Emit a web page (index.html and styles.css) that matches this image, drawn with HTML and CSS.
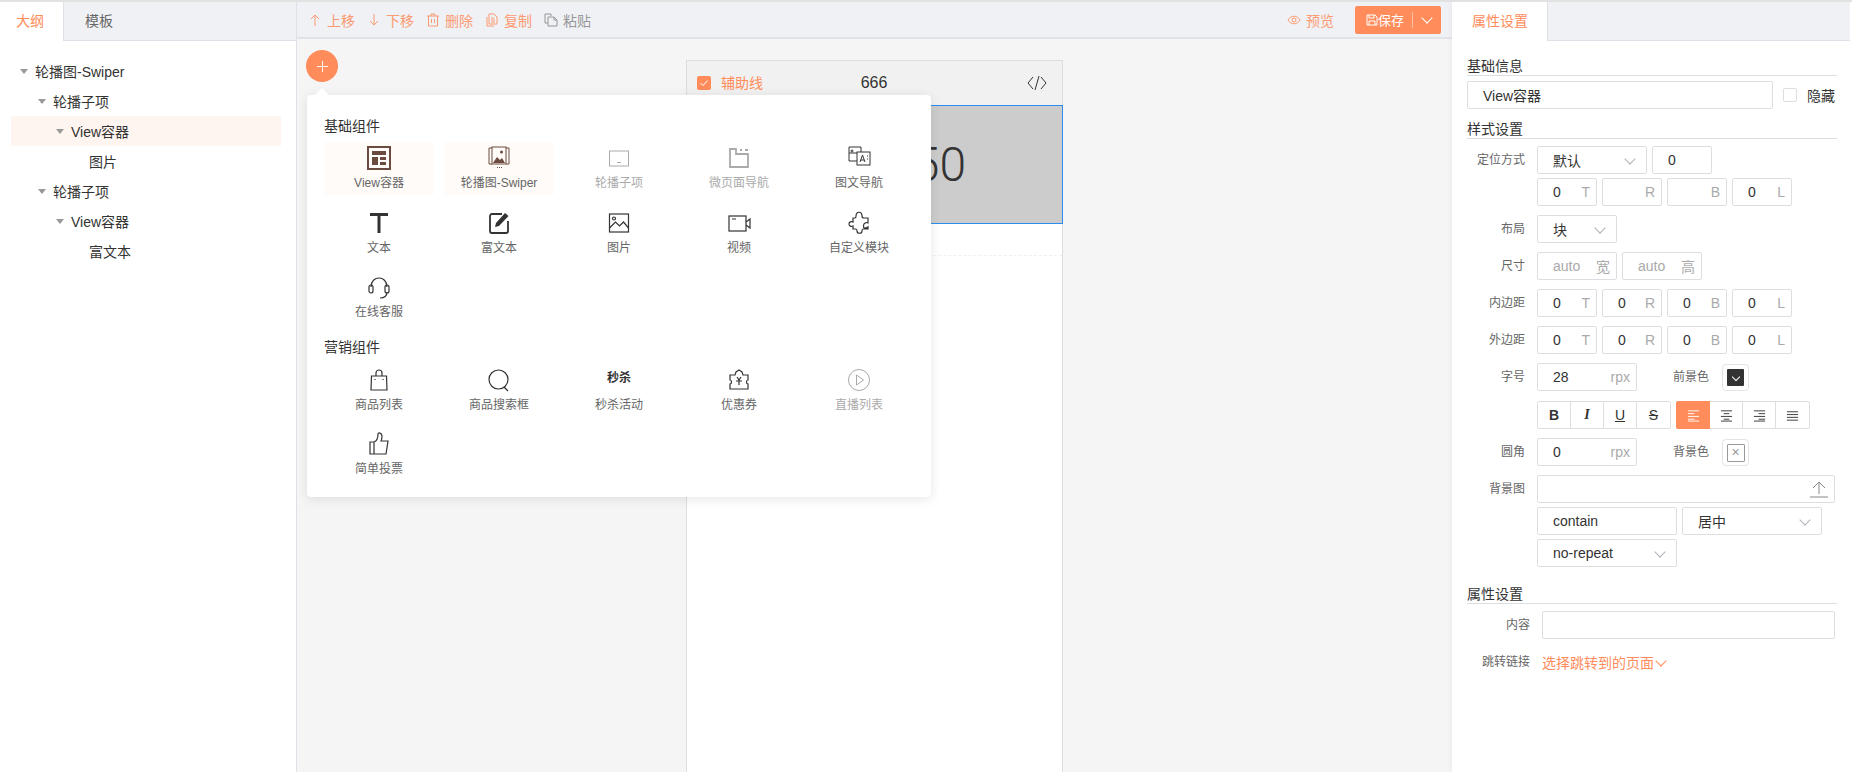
FILE: index.html
```html
<!DOCTYPE html>
<html lang="zh-CN">

<head>
    <meta charset="UTF-8">
    <title>页面编辑</title>
    <link rel="stylesheet" href="styles.css">
</head>

<body>
    <div class="app">
        <!-- left outline -->
        <aside class="left">
            <div class="tabs">
                <div class="tab active">大纲</div>
                <div class="tab">模板</div>
            </div>
            <div class="tree">
                <div class="node d0"><i class="tri"></i>轮播图-Swiper</div>
                <div class="node d1"><i class="tri"></i>轮播子项</div>
                <div class="node d2 selected"><i class="tri"></i>View容器</div>
                <div class="node d3">图片</div>
                <div class="node d1"><i class="tri"></i>轮播子项</div>
                <div class="node d2"><i class="tri"></i>View容器</div>
                <div class="node d3">富文本</div>
            </div>
        </aside>

        <!-- center -->
        <main class="center">
            <div class="toolbar">
                <a class="tool">
                    <svg viewBox="0 0 14 14"><path d="M7 13V2M3 6l4-4 4 4"/></svg>上移
                </a>
                <a class="tool">
                    <svg viewBox="0 0 14 14"><path d="M7 1v11M3 8l4 4 4-4"/></svg>下移
                </a>
                <a class="tool">
                    <svg viewBox="0 0 14 14"><path d="M1 3h12M5 3V1h4v2M2.500 3v10h9V3M5.500 6v4M8.500 6v4"/></svg>删除
                </a>
                <a class="tool">
                    <svg viewBox="0 0 14 14"><path d="M4 1h5l3 3v7H4zM2 4v9h7M6 5h3M6 7h4M6 9h4"/></svg>复制
                </a>
                <a class="tool off">
                    <svg viewBox="0 0 14 14"><path d="M1 1h6v2M1 1v9h3M4 4h6l3 3v6H4zM10 4v3h3"/></svg>粘贴
                </a>
                <a class="tool preview">
                    <svg viewBox="0 0 14 14"><path d="M1 7c3-5 9-5 12 0-3 5-9 5-12 0z"/><circle cx="7" cy="7" r="2"/></svg>预览
                </a>
                <div class="save">
                    <span class="save-main">
                        <svg viewBox="0 0 12 12"><path d="M1 1h8l2 2v8H1zM3 1v3h5V1M3 11V7h6v4"/></svg>保存
                    </span>
                    <span class="save-more"><i class="chev"></i></span>
                </div>
            </div>

            <div class="canvas">
                <div class="phone">
                    <div class="phone-head">
                        <label class="guide"><span class="check">
                            <svg viewBox="0 0 14 14"><path d="M3.500 7l2.500 2.500 4.500-5"/></svg>
                        </span><span class="guide-text">辅助线</span></label>
                        <span class="phone-title">666</span>
                        <svg class="code" viewBox="0 0 20 16"><path d="M6 2L1 8l5 6M14 2l5 6-5 6M12 1L8 15"/></svg>
                    </div>
                    <div class="banner">50</div>
                    <div class="dash"></div>
                </div>

                <div class="add"><svg viewBox="0 0 14 14"><path d="M7 1v12M1 7h12"/></svg></div>

                <div class="popover">
                    <div class="pop-title">基础组件</div>
                    <div class="pop-grid">
                        <div class="item used">
                            <svg class="brown" viewBox="0 0 24 24"><rect x="1" y="1" width="22" height="22"/><path class="fill" d="M5 5h14v4H5zM5 11h6v8H5zM13 11h6v3h-6zM13 16h6v3h-6z"/></svg>
                            <span>View容器</span>
                        </div>
                        <div class="item used">
                            <svg class="brown thin" viewBox="0 0 24 24"><path d="M5 2H2v16h3M19 2h3v16h-3"/><rect x="5" y="1" width="14" height="17"/><circle cx="14.500" cy="6" r="1.500" class="fill"/><path class="fill" d="M6 17l4-6 3 3 2-2 3 5z"/><path d="M10 21.500h1M12 21.500h1M14 21.500h1"/></svg>
                            <span>轮播图-Swiper</span>
                        </div>
                        <div class="item off">
                            <svg viewBox="0 0 24 24"><rect x="2.500" y="5" width="19" height="15"/><path d="M10 16.500h4"/></svg>
                            <span>轮播子项</span>
                        </div>
                        <div class="item off">
                            <svg class="bold" viewBox="0 0 24 24"><path d="M3 3v18h18V8H9V3zM13 4h2M18 4h3"/></svg>
                            <span>微页面导航</span>
                        </div>
                        <div class="item">
                            <svg class="thin" viewBox="0 0 24 24"><path d="M10 7H2V1h12v5"/><path d="M2 7v8h8"/><circle cx="5" cy="5" r="1"/><rect x="10" y="6" width="13" height="13"/><path d="M13 16l2.500-7 2.500 7M14 14h3M20 10h1M20 13h1"/></svg>
                            <span>图文导航</span>
                        </div>
                        <div class="item">
                            <svg class="dark" viewBox="0 0 24 24"><path class="fill" d="M3 2h18v3h-7.500v17h-3V5H3z"/></svg>
                            <span>文本</span>
                        </div>
                        <div class="item">
                            <svg class="dark bold" viewBox="0 0 24 24"><path d="M15 3H5a2 2 0 0 0-2 2v15a2 2 0 0 0 2 2h14a2 2 0 0 0 2-2V10"/><path class="fill" d="M9 12l9-10 3.500 3-9.500 10-4 1z"/></svg>
                            <span>富文本</span>
                        </div>
                        <div class="item">
                            <svg class="dark" viewBox="0 0 24 24"><rect x="2.500" y="3" width="19" height="18"/><circle cx="7" cy="7.500" r="1.500"/><path d="M2.500 17l6-6 4 4 4-4 5 6"/></svg>
                            <span>图片</span>
                        </div>
                        <div class="item">
                            <svg class="dark" viewBox="0 0 24 24"><rect x="2" y="5" width="17" height="15"/><path d="M5 8h4M19 11l4-3v9l-4-3" /></svg>
                            <span>视频</span>
                        </div>
                        <div class="item">
                            <svg class="dark" viewBox="0 0 24 24"><path d="M9 5c0-5 6-5 6 0 0 2 1 2 2 2h4v5c-1 0-2-1-3 0-2 1-2 5 0 5 1 0 2 0 3-1v2h-5c-1 0-1 1-1 2 0 3-5 3-5 0 0-1 0-2-1-2H6v-3c-2 1-4 0-4-2s2-3 4-2V7h2c1 0 1-1 1-2z"/></svg>
                            <span>自定义模块</span>
                        </div>
                        <div class="item">
                            <svg class="dark" viewBox="0 0 24 24"><path d="M4 12C4 0 20 0 20 12M20 17c0 4-3 6-7 6"/><rect x="2" y="10" width="4" height="8" rx="2"/><rect x="18" y="10" width="4" height="8" rx="2"/></svg>
                            <span>在线客服</span>
                        </div>
                    </div>

                    <div class="pop-title second">营销组件</div>
                    <div class="pop-grid">
                        <div class="item">
                            <svg class="dark" viewBox="0 0 24 24"><path d="M4.500 8h15l.5 14H4zM9 8V5a3 3 0 0 1 6 0v3M8 11v1M16 11v1"/></svg>
                            <span>商品列表</span>
                        </div>
                        <div class="item">
                            <svg class="dark" viewBox="0 0 24 24"><circle cx="11.500" cy="11.500" r="9.500"/><path d="M17 19l4 4"/></svg>
                            <span>商品搜索框</span>
                        </div>
                        <div class="item">
                            <b class="seckill">秒杀</b>
                            <span>秒杀活动</span>
                        </div>
                        <div class="item">
                            <svg class="dark" viewBox="0 0 24 24"><path d="M3 7h5l1-3 3-2 3 2 1 3h5v5c-2 0-2 4 0 4v5H3v-5c2 0 2-4 0-4zM10 9l2 3 2-3M9 13h6M12 12v5"/></svg>
                            <span>优惠券</span>
                        </div>
                        <div class="item off">
                            <svg viewBox="0 0 24 24"><circle cx="12" cy="12" r="10.500"/><path d="M9.500 7l7 5-7 5z"/></svg>
                            <span>直播列表</span>
                        </div>
                        <div class="item">
                            <svg class="dark" viewBox="0 0 24 24"><path d="M7 10H3v12h4zM7 10c3-1 4-4 4-8 0-2 4-1 4 2 0 2-.5 4-1 5h7l-2 13H7"/></svg>
                            <span>简单投票</span>
                        </div>
                    </div>
                </div>
            </div>
        </main>

        <!-- right props -->
        <aside class="right">
            <div class="tabs">
                <div class="tab active wide">属性设置</div>
            </div>
            <div class="props">
                <div class="sec-title first">基础信息</div>
                <div class="basic">
                    <div class="box name">View容器</div>
                    <span class="hide-box"></span>
                    <span class="hide-text">隐藏</span>
                </div>

                <div class="sec-title mid">样式设置</div>
                <div class="form-row">
                    <div class="form-label">定位方式</div>
                    <div class="form-body">
                        <div class="box w110">默认<i class="chev"></i></div>
                        <div class="box w60 end">0</div>
                        <div class="box w60">0<em>T</em></div>
                        <div class="box w60"><em>R</em></div>
                        <div class="box w60"><em>B</em></div>
                        <div class="box w60">0<em>L</em></div>
                    </div>
                </div>
                <div class="form-row">
                    <div class="form-label">布局</div>
                    <div class="form-body">
                        <div class="box w80">块<i class="chev"></i></div>
                    </div>
                </div>
                <div class="form-row">
                    <div class="form-label">尺寸</div>
                    <div class="form-body">
                        <div class="box w80 ph">auto<em>宽</em></div>
                        <div class="box w80 ph">auto<em>高</em></div>
                    </div>
                </div>
                <div class="form-row">
                    <div class="form-label">内边距</div>
                    <div class="form-body">
                        <div class="box w60">0<em>T</em></div>
                        <div class="box w60">0<em>R</em></div>
                        <div class="box w60">0<em>B</em></div>
                        <div class="box w60">0<em>L</em></div>
                    </div>
                </div>
                <div class="form-row">
                    <div class="form-label">外边距</div>
                    <div class="form-body">
                        <div class="box w60">0<em>T</em></div>
                        <div class="box w60">0<em>R</em></div>
                        <div class="box w60">0<em>B</em></div>
                        <div class="box w60">0<em>L</em></div>
                    </div>
                </div>
                <div class="form-row">
                    <div class="form-label">字号</div>
                    <div class="form-body">
                        <div class="box w100">28<em>rpx</em></div>
                        <div class="color-label">前景色</div>
                        <div class="swatch"><span class="swatch-dark"><i class="chev"></i></span></div>
                    </div>
                </div>
                <div class="form-row btn-row">
                    <div class="form-label"></div>
                    <div class="form-body nowrap">
                        <div class="btns">
                            <span class="btn b">B</span>
                            <span class="btn i">I</span>
                            <span class="btn u">U</span>
                            <span class="btn s">S</span>
                        </div>
                        <div class="btns">
                            <span class="btn on"><svg viewBox="0 0 14 14"><path d="M1 2h12M1 5h7M1 8h12M1 11h7M1 13h12"/></svg></span>
                            <span class="btn"><svg viewBox="0 0 14 14"><path d="M1 2h12M4 5h6M1 8h12M4 11h6M1 13h12"/></svg></span>
                            <span class="btn"><svg viewBox="0 0 14 14"><path d="M1 2h12M6 5h7M1 8h12M6 11h7M1 13h12"/></svg></span>
                            <span class="btn"><svg viewBox="0 0 14 14"><path d="M1 3h12M1 6h12M1 9h12M1 12h12"/></svg></span>
                        </div>
                    </div>
                </div>
                <div class="form-row">
                    <div class="form-label">圆角</div>
                    <div class="form-body">
                        <div class="box w100">0<em>rpx</em></div>
                        <div class="color-label">背景色</div>
                        <div class="swatch"><span class="swatch-none">×</span></div>
                    </div>
                </div>
                <div class="form-row tight">
                    <div class="form-label">背景图</div>
                    <div class="form-body">
                        <div class="box full">
                            <svg class="upload" viewBox="0 0 18 18"><path d="M9 14V2M3 8l6-6 6 6M0 17h18"/></svg>
                        </div>
                        <div class="box w140">contain</div>
                        <div class="box w140">居中<i class="chev"></i></div>
                        <div class="box w140">no-repeat<i class="chev"></i></div>
                    </div>
                </div>

                <div class="sec-title last">属性设置</div>
                <div class="form-row">
                    <div class="form-label long">内容</div>
                    <div class="form-body">
                        <div class="box content"></div>
                    </div>
                </div>
                <div class="form-row link-row">
                    <div class="form-label long">跳转链接</div>
                    <a class="link">选择跳转到的页面<i class="chev"></i></a>
                </div>
            </div>
        </aside>
    </div>
</body>

</html>
```

FILE: styles.css
```css
* {
    box-sizing: border-box;
}

body {
    margin: 0;
    height: 772px;
    overflow: hidden;
    background: #fff;
    color: #333;
    font-family: "Liberation Sans", "Noto Sans CJK SC", sans-serif;
    font-size: 14px;
    border-top: 2px solid #e2e2e2;
}

svg {
    fill: none;
    stroke: currentColor;
    stroke-width: 1;
}

.app {
    display: flex;
    height: 770px;
}

/* tabs */
.tabs {
    display: flex;
    height: 39px;
    background: #f0f1f5;
    border-bottom: 1px solid #e0e0e8;
}

.tab {
    width: 64px;
    height: 39px;
    line-height: 38px;
    padding-left: 16px;
    color: #666;
}

.tab + .tab {
    padding-left: 21px;
}

.tab.active {
    background: #fff;
    color: #ff8c5a;
    border-right: 1px solid #e0e0e8;
}

.tab.wide {
    width: 96px;
    padding-left: 20px;
}

/* left */
.left {
    width: 297px;
    flex: none;
    border-right: 1px solid #e0e0e8;
}

.tree {
    padding: 15px 15px 0 11px;
}

.node {
    display: flex;
    align-items: center;
    height: 30px;
    color: #333;
}

.node.selected {
    background: #fff5f0;
}

.tri {
    width: 0;
    height: 0;
    margin-right: 7px;
    border-left: 4px solid transparent;
    border-right: 4px solid transparent;
    border-top: 5px solid #999;
}

.d0 {
    padding-left: 9px;
}

.d1 {
    padding-left: 27px;
}

.d2 {
    padding-left: 45px;
}

.d3 {
    padding-left: 78px;
}

/* toolbar */
.center {
    flex: 1;
    display: flex;
    flex-direction: column;
    min-width: 0;
}

.toolbar {
    display: flex;
    align-items: center;
    gap: 12px;
    height: 37px;
    padding: 0 11px;
    background: #f0f1f5;
    border-bottom: 2px solid #e2e2e8;
    flex: none;
}

.tool {
    display: flex;
    align-items: center;
    gap: 5px;
    color: #ff8c5a;
    opacity: .85;
}

.tool svg {
    width: 14px;
    height: 14px;
}

.tool.off {
    color: #888;
}

.tool.preview {
    margin-left: auto;
    margin-right: 9px;
}

.save {
    display: flex;
    align-items: center;
    width: 86px;
    height: 28px;
    background: #ff8c5a;
    color: #fff;
    border-radius: 2px;
}

.save-main {
    display: flex;
    align-items: center;
    justify-content: center;
    width: 57px;
    padding-left: 3px;
    font-size: 13px;
}

.save-main svg {
    width: 12px;
    height: 12px;
}

.save-more {
    display: flex;
    justify-content: center;
    flex: 1;
    height: 16px;
    padding-top: 2px;
    border-left: 1px solid #ffc4a8;
}

.save-more .chev {
    margin: 0;
    border-color: #fff;
}

.chev {
    display: block;
    width: 8px;
    height: 8px;
    margin-left: auto;
    margin-top: -2px;
    border-right: 1px solid #b0b0b8;
    border-bottom: 1px solid #b0b0b8;
    transform: rotate(45deg);
}

/* canvas */
.canvas {
    position: relative;
    flex: 1;
    display: flex;
    justify-content: center;
    padding-top: 21px;
    background: #f5f5f5;
    min-height: 0;
    overflow: hidden;
}

.phone {
    width: 377px;
    height: 800px;
    background: #fff;
    border: 1px solid #ddd;
    flex: none;
}

.phone-head {
    display: flex;
    align-items: center;
    height: 44px;
    padding: 0 15px 0 10px;
    background: #f1f1f1;
}

.guide {
    display: flex;
    align-items: center;
    gap: 10px;
    width: 140px;
    color: #ff8c5a;
}

.guide-text {
    margin-top: -2px;
}

.check {
    display: block;
    width: 14px;
    height: 14px;
    background: #ff8c5a;
    border-radius: 2px;
    color: #fff;
}

.check svg {
    display: block;
}

.phone-title {
    width: 74px;
    text-align: center;
    font-size: 16px;
    color: #333;
}

.code {
    width: 20px;
    height: 16px;
    margin-left: auto;
    color: #333;
}

.banner {
    display: flex;
    align-items: center;
    justify-content: flex-end;
    height: 119px;
    margin-right: -1px;
    padding-right: 96px;
    background: #ccc;
    border: 1px solid #2d8cf0;
    font-size: 48px;
    font-family: Roboto, "Liberation Sans", sans-serif;
    font-weight: 300;
    color: #333;
}

.dash {
    height: 32px;
    border-bottom: 1px dashed #f0f0f0;
}

.add {
    position: absolute;
    left: 9px;
    top: 11px;
    display: flex;
    align-items: center;
    justify-content: center;
    width: 32px;
    height: 32px;
    border-radius: 50%;
    background: #ff8c5a;
    color: #fff;
}

.add svg {
    width: 13px;
    height: 13px;
}

.popover {
    position: absolute;
    left: 10px;
    top: 56px;
    width: 624px;
    padding: 21px 17px 16px;
    background: #fff;
    border-radius: 4px;
    box-shadow: 0 2px 12px rgba(0, 0, 0, .1);
}

.popover::before {
    content: "";
    position: absolute;
    left: 10px;
    top: -5px;
    width: 10px;
    height: 10px;
    background: #fff;
    transform: rotate(45deg);
}

.pop-title {
    line-height: 20px;
    margin-bottom: 6px;
    color: #333;
}

.pop-title.second {
    margin-top: 13px;
    margin-bottom: 7px;
}

.pop-grid {
    display: grid;
    grid-template-columns: repeat(5, 110px);
    gap: 12px 10px;
}

.item {
    display: flex;
    flex-direction: column;
    align-items: center;
    height: 52.500px;
    padding-top: 4px;
    color: #333;
    font-size: 12px;
}

.item svg {
    width: 24px;
    height: 24px;
    flex: none;
}

.item span {
    margin-top: 5px;
    line-height: 16px;
    color: #666;
}

.item.used {
    background: #fffbf8;
}

.item.off svg,
.item.off span {
    color: #aaa;
}

.item svg.brown {
    color: #6b4a3f;
    stroke-width: 2;
}

.item svg.brown.thin {
    stroke-width: 1;
}

.item svg.dark {
    color: #333;
    stroke-width: 1.200;
}

.item svg.thin {
    stroke-width: 1;
}

.item svg.bold {
    stroke-width: 1.800;
}

.fill {
    fill: currentColor;
    stroke: none;
}

.seckill {
    height: 24px;
    line-height: 20px;
    font-size: 12px;
    color: #333;
}

/* right */
.right {
    width: 400px;
    flex: none;
    padding-right: 2px;
    box-shadow: -2px 0 4px rgba(0, 0, 0, .03);
    position: relative;
}

.props {
    padding: 0 13px 0 15px;
}

.sec-title {
    height: 19px;
    line-height: 18px;
    color: #333;
    border-bottom: 1px solid #dcdee2;
}

.sec-title.first {
    margin-top: 16px;
    margin-bottom: 5px;
}

.sec-title.mid {
    margin-top: 11px;
    margin-bottom: 7px;
}

.sec-title.last {
    margin-top: 18px;
    margin-bottom: 7px;
}

.basic {
    display: flex;
    align-items: center;
}

.box {
    display: flex;
    align-items: center;
    height: 28px;
    padding: 0 6px 0 15px;
    background: #fff;
    border: 1px solid #dcdee2;
    border-radius: 2px;
    color: #333;
    flex: none;
}

.box em {
    margin-left: auto;
    font-style: normal;
    color: #aaa;
}

.box.ph {
    color: #aaa;
}

.box .chev {
    margin-right: 6px;
}

.box.end {
    margin-right: 100px;
}

.name {
    width: 306px;
}

.hide-box {
    width: 14px;
    height: 14px;
    margin-left: 10px;
    border: 1px solid #dcdee2;
    border-radius: 2px;
}

.hide-text {
    margin-left: 10px;
}

.form-row {
    display: flex;
    margin-bottom: 9px;
}

.form-row.tight {
    margin-bottom: 0;
}

.btn-row {
    margin-top: 10px;
}

.form-label {
    width: 58px;
    margin-right: 12px;
    flex: none;
    line-height: 28px;
    text-align: right;
    font-size: 12px;
    color: #666;
}

.form-label.long {
    width: 63px;
}

.form-body {
    display: flex;
    flex-wrap: wrap;
    gap: 4px 5px;
    width: 298px;
}

.form-body.nowrap {
    flex-wrap: nowrap;
}

.w60 {
    width: 60px;
}

.w80 {
    width: 80px;
}

.w100 {
    width: 100px;
}

.w110 {
    width: 110px;
}

.w140 {
    width: 140px;
}

.full {
    width: 298px;
}

.content {
    width: 293px;
}

.upload {
    width: 18px;
    height: 18px;
    margin-left: auto;
    color: #888;
}

.color-label {
    width: 75px;
    padding-left: 31px;
    line-height: 28px;
    font-size: 12px;
    color: #666;
    flex: none;
}

.swatch {
    display: flex;
    align-items: center;
    justify-content: center;
    width: 27px;
    height: 27px;
    border: 1px solid #e4e4e4;
    border-radius: 4px;
    flex: none;
    margin-top: 1px;
}

.swatch-dark {
    display: flex;
    align-items: center;
    justify-content: center;
    width: 17px;
    height: 17px;
    background: #333;
    border-radius: 1px;
}

.swatch-dark .chev {
    width: 6px;
    height: 6px;
    margin: -2px 0 0;
    border-color: #fff;
}

.swatch-none {
    width: 18px;
    height: 18px;
    line-height: 15px;
    text-align: center;
    border: 1px solid #999;
    border-radius: 1px;
    color: #999;
}

.btns {
    display: flex;
    height: 28px;
    border: 1px solid #dcdee2;
    border-radius: 2px;
}

.btn {
    display: flex;
    align-items: center;
    justify-content: center;
    width: 33px;
    border-right: 1px solid #dcdee2;
    font-size: 14px;
    color: #333;
}

.btn:last-child {
    border-right: 0;
}

.btn svg {
    width: 13px;
    height: 13px;
}

.btn.b {
    font-weight: bold;
}

.btn.i {
    font-family: "Liberation Serif", serif;
    font-style: italic;
    font-weight: bold;
}

.btn.u {
    text-decoration: underline;
}

.btn.s {
    text-decoration: line-through;
}

.btn.on {
    margin: -1px 0 -1px -1px;
    background: #ff8c5a;
    border-right: 0;
    border-radius: 2px 0 0 2px;
    color: #fff;
    width: 34px;
}

.link-row {
    align-items: center;
    margin-top: 5px;
}

.link {
    display: flex;
    align-items: center;
    color: #ff8c5a;
}

.link .chev {
    margin-left: 3px;
    border-color: #ff8c5a;
}
```
